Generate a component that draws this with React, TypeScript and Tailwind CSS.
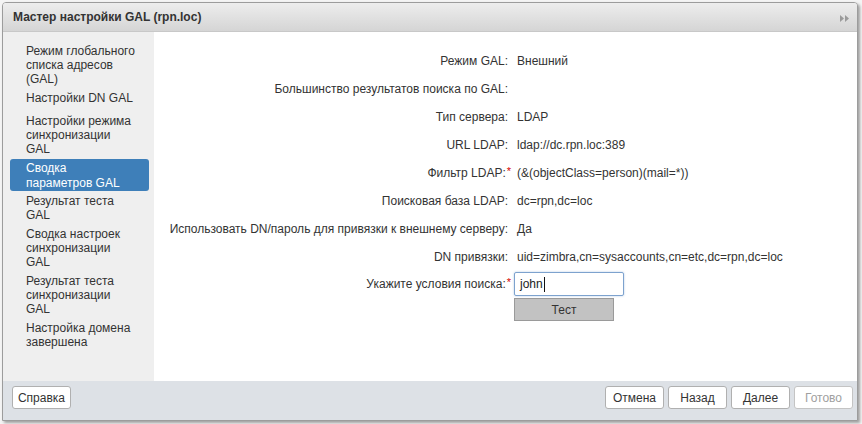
import React from "react";

const navItems: { lines: string[]; selected?: boolean; extra?: boolean }[] = [
  { lines: ["Режим глобального", "списка адресов", "(GAL)"] },
  { lines: ["Настройки DN GAL"], extra: true },
  { lines: ["Настройки режима", "синхронизации", "GAL"] },
  { lines: ["Сводка", "параметров GAL"], selected: true },
  { lines: ["Результат теста", "GAL"] },
  { lines: ["Сводка настроек", "синхронизации", "GAL"] },
  { lines: ["Результат теста", "синхронизации", "GAL"] },
  { lines: ["Настройка домена", "завершена"] },
];

const rows: { label: string; value: string; req?: boolean }[] = [
  { label: "Режим GAL:", value: "Внешний" },
  { label: "Большинство результатов поиска по GAL:", value: "" },
  { label: "Тип сервера:", value: "LDAP" },
  { label: "URL LDAP:", value: "ldap://dc.rpn.loc:389" },
  { label: "Фильтр LDAP:", value: "(&(objectClass=person)(mail=*))", req: true },
  { label: "Поисковая база LDAP:", value: "dc=rpn,dc=loc" },
  { label: "Использовать DN/пароль для привязки к внешнему серверу:", value: "Да" },
  { label: "DN привязки:", value: "uid=zimbra,cn=sysaccounts,cn=etc,dc=rpn,dc=loc" },
];

function Btn({ children, disabled }: { children: React.ReactNode; disabled?: boolean }) {
  return (
    <button
      className={
        disabled
          ? "w-[59px] h-[23px] bg-white border border-[#c4c4c4] rounded-[3px] text-[12px] text-[#a0a0a0] leading-none"
          : "w-[59px] h-[23px] bg-white border border-[#b0b0b0] rounded-[3px] text-[12px] text-[#333] leading-none"
      }
    >
      {children}
    </button>
  );
}

export default function App() {
  return (
    <div
      className="w-[862px] h-[424px] bg-[#f4f4f4] overflow-hidden pt-[2px] pl-[2px]"
      style={{ fontFamily: '"Liberation Sans", Arial, sans-serif' }}
    >
      <div className="w-[856px] h-[419px] border border-[#9c9c9c] rounded-t-[4px] flex flex-col overflow-hidden bg-white shadow-[2px_2px_3px_rgba(0,0,0,0.35)]">
        {/* Header */}
        <div className="h-[29px] shrink-0 flex items-center justify-between pl-[10px] pr-[8px] bg-gradient-to-b from-[#ededed] to-[#d5d5d5] border-b border-[#c8c8c8]">
          <span className="text-[12px] font-bold text-[#333]">Мастер настройки GAL (rpn.loc)</span>
          <svg width="9" height="7" viewBox="0 0 9 7" className="mt-[2px]">
            <path d="M0 0 L4 3.5 L0 7 Z" fill="#9a9a9a" />
            <path d="M5 0 L9 3.5 L5 7 Z" fill="#9a9a9a" />
          </svg>
        </div>

        {/* Body */}
        <div className="flex h-[349px] shrink-0">
          <div className="w-[151px] shrink-0 bg-[#efefef] pt-[10px] pl-[7px] pr-[5px] flex flex-col gap-[0.5px]">
            {navItems.map((it, i) => (
              <div
                key={i}
                className={
                  it.selected
                    ? "bg-[#3e7fb9] text-white rounded-[3px] pl-[16px] pt-[2.5px] pb-[1.5px] text-[12px] leading-[14.2px]"
                    : it.extra
                    ? "text-[#333] pl-[16px] pt-[2px] pb-[6px] text-[12px] leading-[14.2px]"
                    : "text-[#333] pl-[16px] py-[2px] text-[12px] leading-[14.2px]"
                }
              >
                {it.lines.map((l, j) => (
                  <div key={j}>{l}</div>
                ))}
              </div>
            ))}
          </div>

          <div className="flex-1 bg-white pt-[15px] pl-[12px]">
            <div className="grid grid-cols-[345px_1fr] gap-x-[6px] text-[12px] text-[#333]">
              {rows.map((r, i) => (
                <React.Fragment key={i}>
                  <div className="h-[28px] flex items-center justify-end whitespace-nowrap">
                    {r.label}
                    {r.req ? <span className="text-[#d40000] text-[11px] -mt-[4px] ml-[1px]">*</span> : <span className="w-[3px]" />}
                  </div>
                  <div className="h-[28px] flex items-center whitespace-nowrap">{r.value}</div>
                </React.Fragment>
              ))}
              <div className="h-[26px] flex items-center justify-end whitespace-nowrap">
                Укажите условия поиска:
                <span className="text-[#d40000] text-[11px] -mt-[4px] ml-[1px]">*</span>
              </div>
              <div className="h-[26px] flex items-center -ml-[3px]">
                <div className="w-[110px] h-[24px] border border-[#7da2ce] rounded-[2px] flex items-center pl-[5px] shadow-[0_0_2px_rgba(90,140,200,0.5)]">
                  <span className="text-[12px] text-[#222]">john</span>
                  <span className="w-[1px] h-[15px] bg-[#111] ml-[1px]" />
                </div>
              </div>
              <div />
              <div className="-ml-[3px] pt-[1px]">
                <div className="w-[100px] h-[23px] bg-[#c2c2c2] border border-[#9a9a9a] flex items-center justify-center text-[12px] text-[#333]">
                  Тест
                </div>
              </div>
            </div>
          </div>
        </div>

        {/* Footer */}
        <div className="flex-1 bg-[#dde1e6] flex justify-between pt-[5px] pl-[9px] pr-[4px]">
          <Btn>Справка</Btn>
          <div className="flex gap-[4px]">
            <Btn>Отмена</Btn>
            <Btn>Назад</Btn>
            <Btn>Далее</Btn>
            <Btn disabled>Готово</Btn>
          </div>
        </div>
      </div>
    </div>
  );
}
